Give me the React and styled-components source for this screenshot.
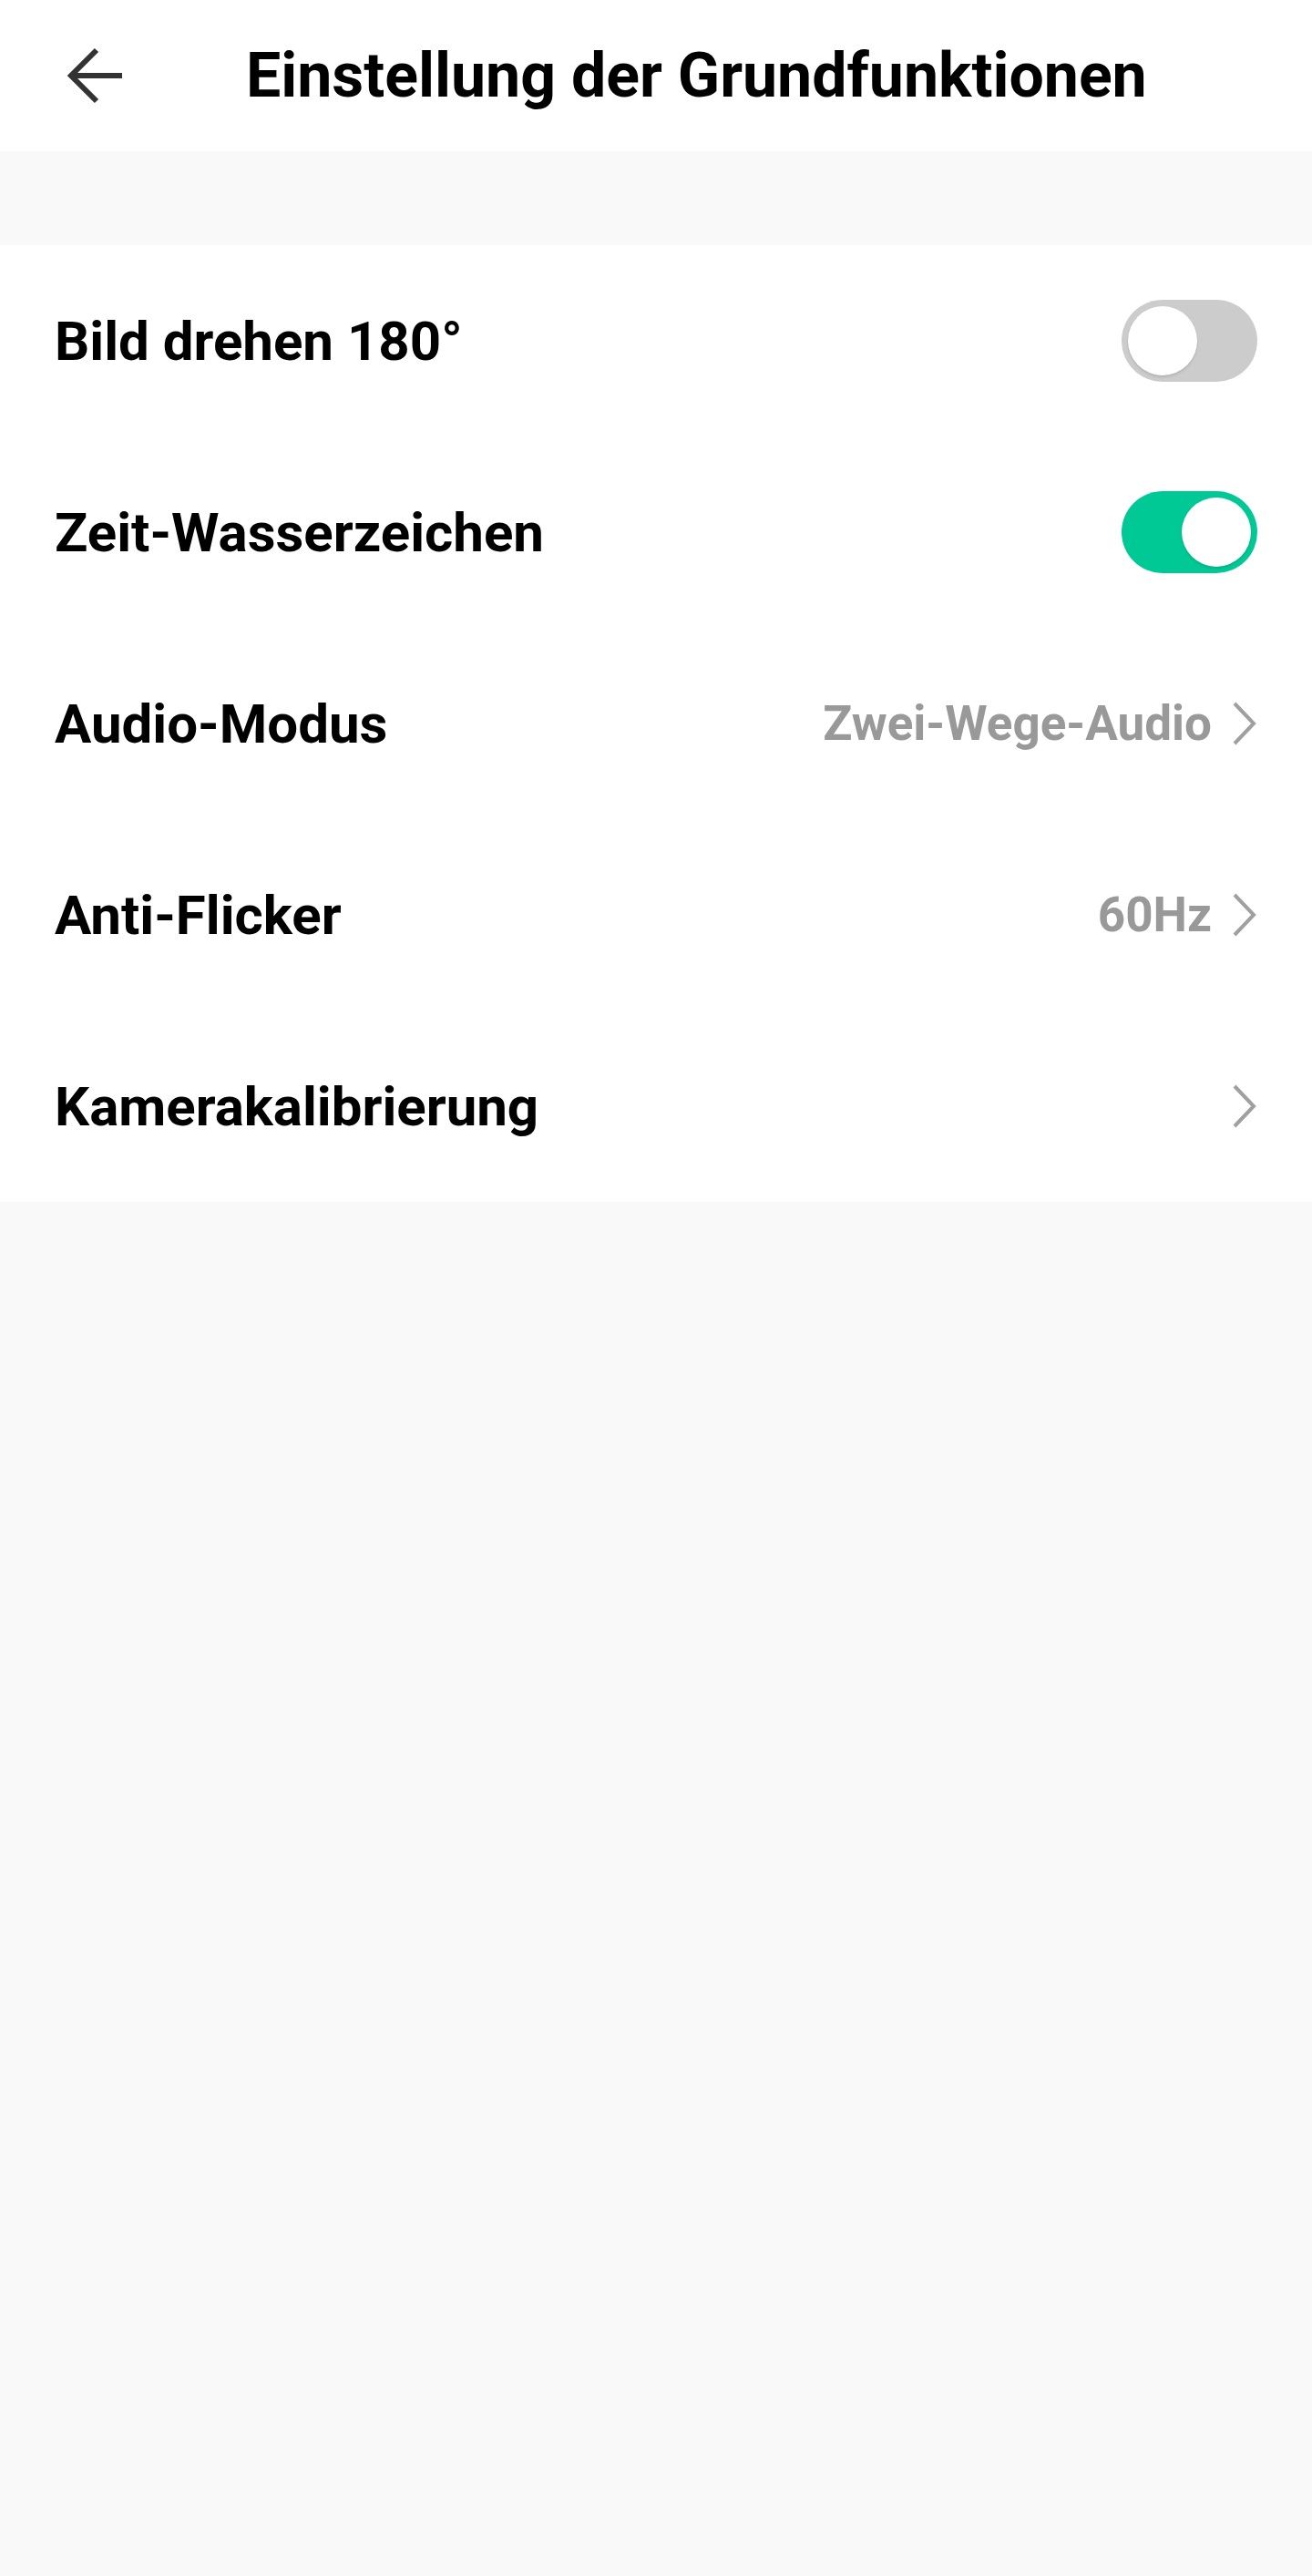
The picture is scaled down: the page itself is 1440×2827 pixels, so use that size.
import React from 'react'
import styled, { createGlobalStyle } from 'styled-components'

const textColor = '#000000'
const grayTextColor = '#999999'
const pageGray = '#f9f9f9'
const green = '#00c995'

const GlobalStyle = createGlobalStyle`
  html, body {
    margin: 0;
    padding: 0;
    background: ${pageGray};
    font-family: Roboto, "Noto Sans", "Liberation Sans", sans-serif;
  }
`

const Page = styled.div`
  min-height: 2827px;
  background: ${pageGray};
`

const Header = styled.header`
  height: 166px;
  display: flex;
  align-items: center;
  background: #ffffff;
  padding-left: 69px;
`

const BackButton = styled.button`
  width: 72px;
  height: 72px;
  padding: 0;
  border: 0;
  background: transparent;
  display: flex;
  align-items: center;
  justify-content: center;
`

const Title = styled.h1`
  margin: 0 0 0 129px;
  font-weight: 700;
  font-size: 68px;
  line-height: 1;
  color: ${textColor};
  white-space: nowrap;
`

const Spacer = styled.div`
  height: 103px;
`

const List = styled.div`
  background: #ffffff;
`

const Row = styled.div`
  height: 210px;
  display: flex;
  align-items: center;
  justify-content: space-between;
  padding: 0 60px 0 60px;
`

const Label = styled.span`
  font-weight: 700;
  font-size: 60px;
  color: ${textColor};
`

const Right = styled.div`
  display: flex;
  align-items: center;
  gap: 22px;
`

const Value = styled.span`
  font-weight: 700;
  font-size: 53px;
  color: ${grayTextColor};
`

const Track = styled.div`
  width: 149px;
  height: 90px;
  border-radius: 45px;
  box-sizing: border-box;
  padding: 7px;
  display: flex;
  justify-content: ${({ on }) => (on ? 'flex-end' : 'flex-start')};
  background: ${({ on }) => (on ? green : '#cccccc')};
`

const Knob = styled.div`
  width: 76px;
  height: 76px;
  border-radius: 50%;
  background: #ffffff;
  box-shadow: 0 2px 3px rgba(0, 0, 0, 0.12);
`

function Toggle({ on }) {
  return (
    <Track on={on}>
      <Knob />
    </Track>
  )
}

function Chevron() {
  return (
    <svg width="28" height="48" viewBox="0 0 28 48" fill="none">
      <path d="M3 2 L24 24 L3 46" stroke="#a0a0a0" strokeWidth="4" strokeLinejoin="miter" />
    </svg>
  )
}

function BackArrow() {
  return (
    <svg width="62" height="62" viewBox="0 0 62 62" fill="none">
      <path d="M60 31 H6" stroke="#333333" strokeWidth="6" />
      <path d="M32 3 L4 31 L32 59" stroke="#333333" strokeWidth="6" strokeLinejoin="miter" />
    </svg>
  )
}

const rows = [
  { label: 'Bild drehen 180°', toggle: false },
  { label: 'Zeit-Wasserzeichen', toggle: true },
  { label: 'Audio-Modus', value: 'Zwei-Wege-Audio' },
  { label: 'Anti-Flicker', value: '60Hz' },
  { label: 'Kamerakalibrierung', value: '' }
]

export default function App() {
  return (
    <Page>
      <GlobalStyle />
      <Header>
        <BackButton>
          <BackArrow />
        </BackButton>
        <Title>Einstellung der Grundfunktionen</Title>
      </Header>
      <Spacer />
      <List>
        {rows.map((row) => (
          <Row key={row.label}>
            <Label>{row.label}</Label>
            {typeof row.toggle === 'boolean' ? (
              <Toggle on={row.toggle} />
            ) : (
              <Right>
                {row.value && <Value>{row.value}</Value>}
                <Chevron />
              </Right>
            )}
          </Row>
        ))}
      </List>
    </Page>
  )
}
